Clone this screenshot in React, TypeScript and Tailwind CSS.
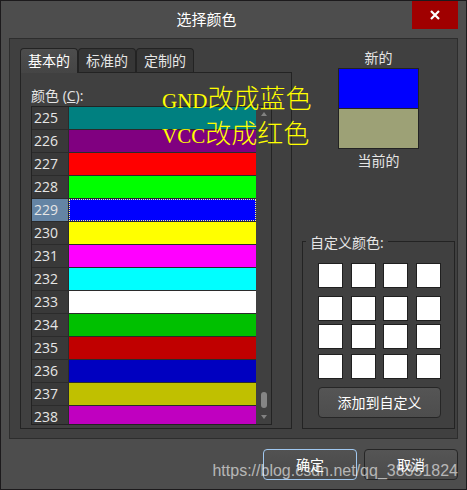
import { useState } from 'react';

const COLORS = [
  { id: 225, value: '#008080' },
  { id: 226, value: '#800080' },
  { id: 227, value: '#ff0000' },
  { id: 228, value: '#00ff00' },
  { id: 229, value: '#0000ff' },
  { id: 230, value: '#ffff00' },
  { id: 231, value: '#ff00ff' },
  { id: 232, value: '#00ffff' },
  { id: 233, value: '#ffffff' },
  { id: 234, value: '#00c000' },
  { id: 235, value: '#c00000' },
  { id: 236, value: '#0000c0' },
  { id: 237, value: '#c0c000' },
  { id: 238, value: '#c000c0' },
];

const TABS = ['基本的', '标准的', '定制的'];
const CUSTOM_SLOTS = Array.from({ length: 16 }, (_, i) => i + 1);

function TitleBar() {
  return (
    <header className="flex h-[37px] items-start pr-2">
      <h1 className="flex-1 text-center text-[15px] leading-9 text-white">选择颜色</h1>
      <button type="button" aria-label="关闭" className="flex h-7 w-[46px] items-center justify-center bg-[#a00000]">
        <svg width="10" height="10" viewBox="0 0 10 10" fill="none" stroke="#fff" strokeWidth="2.2">
          <path d="M1 1l8 8M9 1L1 9" />
        </svg>
      </button>
    </header>
  );
}

function Tabs({ active, onChange }: { active: number; onChange: (i: number) => void }) {
  return (
    <div role="tablist" className="flex h-6">
      {TABS.map((name, i) => (
        <button
          key={name}
          type="button"
          role="tab"
          aria-selected={i === active}
          onClick={() => onChange(i)}
          className={
            i === active
              ? 'z-10 -mb-px w-[58px] rounded-t border border-b-0 border-[#232323] bg-linear-to-b from-[#4d4d4d] to-[#454545] text-white'
              : 'w-[58px] rounded-t border border-b-0 border-[#232323] bg-[#363636] text-[#e6e6e6]'
          }
        >
          {name}
        </button>
      ))}
    </div>
  );
}

function ColorList({ selected, onSelect }: { selected: number; onSelect: (id: number) => void }) {
  return (
    <div className="flex h-[319px] overflow-hidden border border-[#232323]">
      <div role="listbox" aria-labelledby="color-label" className="flex-1">
        {COLORS.map((c) => (
          <button
            key={c.id}
            type="button"
            role="option"
            aria-selected={c.id === selected}
            onClick={() => onSelect(c.id)}
            className="flex h-[23px] w-full border-b border-[#2b2b2b] text-left leading-[22px]"
          >
            <span
              className={
                c.id === selected
                  ? 'h-full w-[37px] border-r border-[#2b2b2b] bg-[#6484a4] pl-0.5 text-[#e6e6e6]'
                  : 'h-full w-[37px] border-r border-[#2b2b2b] bg-[#393939] pl-0.5 text-[#e6e6e6]'
              }
            >
              {c.id}
            </span>
            <span
              className={c.id === selected ? 'h-full flex-1 border border-dotted border-[#ffff80]' : 'h-full flex-1'}
              style={{ backgroundColor: c.value }}
            />
          </button>
        ))}
      </div>
      <div aria-hidden="true" className="flex w-[15px] flex-col items-center py-[5px]">
        <svg width="6" height="4" viewBox="0 0 6 4" fill="#828282"><path d="M3 0l3 4H0z" /></svg>
        <div className="mt-auto h-4 w-1.5 rounded-full bg-[#858585]" />
        <svg className="mt-[7px]" width="6" height="4" viewBox="0 0 6 4" fill="#828282"><path d="M0 0h6L3 4z" /></svg>
      </div>
    </div>
  );
}

function CustomColors() {
  return (
    <fieldset className="mt-auto border border-[#232323] pr-[13px] pb-2.5 pl-[15px]">
      <legend className="-ml-3 h-5 px-1 leading-6">自定义颜色:</legend>
      <div className="mt-3 grid grid-cols-[repeat(4,25px)] grid-rows-[33px_28px_30px_25px] justify-between">
        {CUSTOM_SLOTS.map((n) => (
          <button key={n} type="button" aria-label={`自定义颜色 ${n}`} className="size-[25px] border border-[#1f1f1f] bg-white" />
        ))}
      </div>
      <button type="button" className="mt-2 h-[31px] w-full rounded border border-[#262626] bg-linear-to-b from-[#555] to-[#4d4d4d] text-white">
        添加到自定义
      </button>
    </fieldset>
  );
}

export default function App() {
  const [tab, setTab] = useState(0);
  const [selected, setSelected] = useState(229);
  const current = COLORS.find((c) => c.id === selected) ?? COLORS[4];

  return (
    <main className="relative min-h-screen w-full border border-[#1c1a1c] bg-[#4d4d4d] font-['Open_Sans','Noto_Sans_CJK_SC',sans-serif] text-[14px] leading-5 text-[#e6e6e6]">
      <TitleBar />

      <section className="mr-2 ml-2 flex gap-2.5 border border-[#2d2d2d] bg-[#404040] py-[9px] pr-0.5 pl-2.5">
        <div className="flex-1">
          <Tabs active={tab} onChange={setTab} />
          <div role="tabpanel" className="border border-[#232323] pt-[13px] pr-[19px] pb-[3px] pl-2.5">
            <div id="color-label">
              颜色 (<u>C</u>):
            </div>
            <ColorList selected={selected} onSelect={setSelected} />
          </div>
        </div>

        <div className="flex w-[153px] flex-col">
          <div className="text-center">新的</div>
          <div className="mx-auto w-[81px] border border-[#232323]">
            <div className="h-[39px]" style={{ backgroundColor: current.value }} />
            <div className="h-10 border-t border-[#232323] bg-[#9da176]" />
          </div>
          <div className="text-center leading-6">当前的</div>
          <CustomColors />
        </div>
      </section>

      <footer className="mt-2.5 mr-2 flex justify-end gap-[7px] pb-[9px]">
        <button type="button" className="h-[31px] w-[94px] rounded border border-[#a0c8f0] bg-linear-to-b from-[#525252] to-[#484848] text-white">
          确定
        </button>
        <button type="button" className="h-[31px] w-[94px] rounded border border-[#262626] bg-linear-to-b from-[#555] to-[#4b4b4b] text-white">
          取消
        </button>
      </footer>

      <div className="pointer-events-none absolute top-[82px] left-[161px] z-20 font-['Liberation_Serif','Noto_Sans_CJK_SC',serif] text-[26px] leading-[33px] font-light whitespace-nowrap text-[#ffff00]">
        <div><span className="text-[21px] font-normal">GND</span>改成蓝色</div>
        <div><span className="text-[21px] font-normal">VCC</span>改成红色</div>
      </div>
      <div className="pointer-events-none absolute right-2 bottom-2 z-20 font-['Liberation_Sans',sans-serif] text-[16px] leading-5 whitespace-nowrap text-white/60">
        https://blog.csdn.net/qq_38351824
      </div>
    </main>
  );
}
